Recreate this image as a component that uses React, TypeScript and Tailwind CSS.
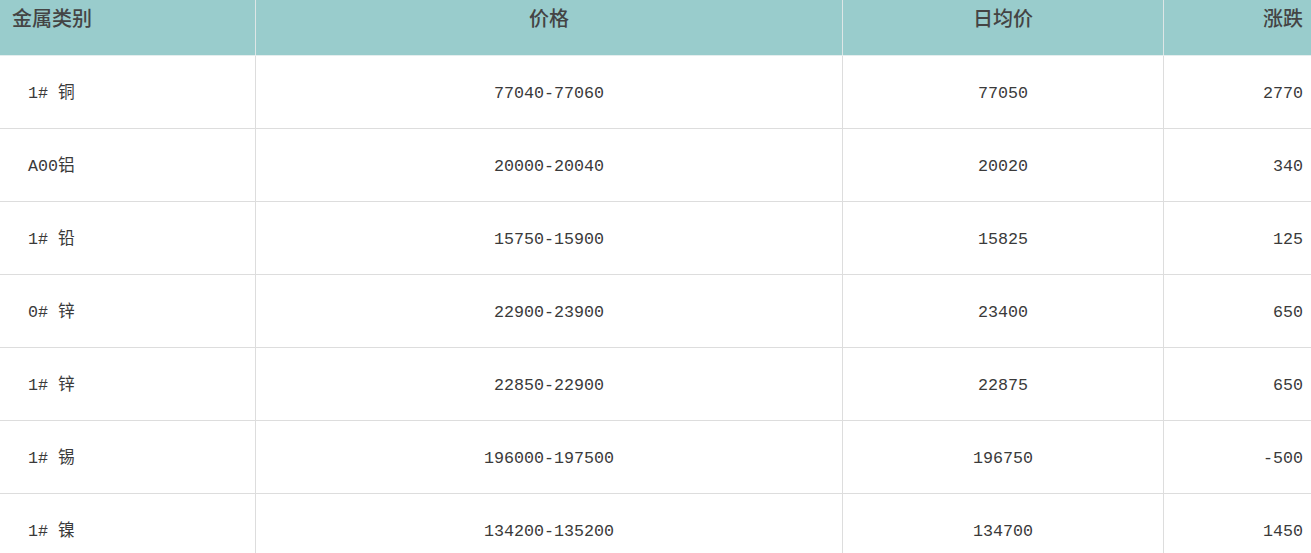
import React from "react";

const rows = [
  ["1# 铜", "77040-77060", "77050", "2770"],
  ["A00铝", "20000-20040", "20020", "340"],
  ["1# 铅", "15750-15900", "15825", "125"],
  ["0# 锌", "22900-23900", "23400", "650"],
  ["1# 锌", "22850-22900", "22875", "650"],
  ["1# 锡", "196000-197500", "196750", "-500"],
  ["1# 镍", "134200-135200", "134700", "1450"],
];

const body = { fontFamily: '"Liberation Mono", "Noto Sans CJK SC", monospace' };
const head = { fontFamily: '"Noto Sans CJK SC", sans-serif' };

export default function App() {
  return (
    <div className="w-[1311px] h-[553px] overflow-hidden bg-white">
      <div
        className="grid grid-cols-[256px_587px_321px_1fr] bg-[#99cccc] text-[20px] font-medium text-[#444] h-[56px] border-b border-[#e4eeee]"
        style={head}
      >
        <div className="border-r border-[#dde6e6] pl-[12px] pt-[4px] leading-[28px]">金属类别</div>
        <div className="border-r border-[#dde6e6] text-center pt-[4px] leading-[28px]">价格</div>
        <div className="border-r border-[#dde6e6] text-center pt-[4px] leading-[28px]">日均价</div>
        <div className="text-right pr-[8px] pt-[4px] leading-[28px]">涨跌</div>
      </div>
      {rows.map((r, i) => (
        <div
          key={i}
          className="grid grid-cols-[256px_587px_321px_1fr] h-[73px] border-b border-[#dddddd] text-[16.7px] text-[#3a3a3a]"
          style={body}
        >
          <div className="border-r border-[#dddddd] pl-[28px] pt-[3px] flex items-center whitespace-pre">{r[0]}</div>
          <div className="border-r border-[#dddddd] pt-[3px] flex items-center justify-center">{r[1]}</div>
          <div className="border-r border-[#dddddd] pt-[3px] flex items-center justify-center">{r[2]}</div>
          <div className="flex items-center justify-end pr-[8px] pt-[3px]">{r[3]}</div>
        </div>
      ))}
    </div>
  );
}
